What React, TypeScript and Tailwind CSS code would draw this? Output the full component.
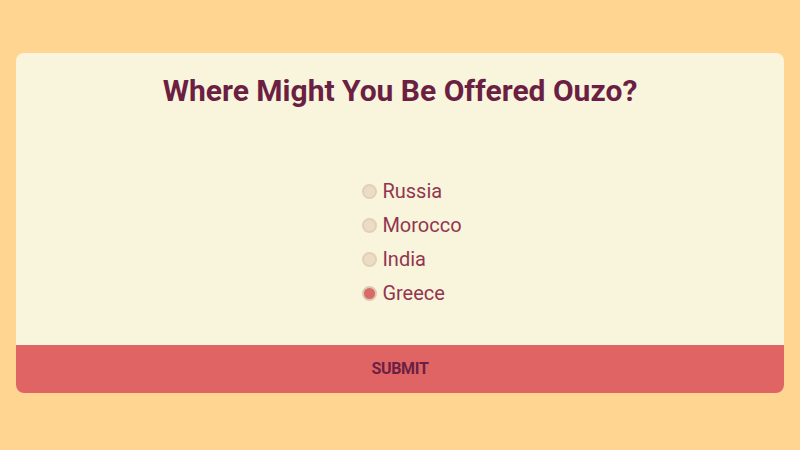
import { useState } from 'react';

const options = ['Russia', 'Morocco', 'India', 'Greece'];

export default function App() {
  const [selected, setSelected] = useState('Greece');

  return (
    <div className="flex h-[450px] w-[800px] justify-center bg-[#ffd591] pt-[53px] font-['Roboto',sans-serif]">
      <div className="flex h-[340px] w-[768px] flex-col overflow-hidden rounded-lg bg-[#f8f5dc]">
        <h1 className="mt-[18px] text-center text-[30px] font-bold leading-[40px] text-[#6b1f42]">
          Where Might You Be Offered Ouzo?
        </h1>
        <div className="flex flex-1 justify-center pt-[69px] pl-[24px]">
          <ul className="flex flex-col gap-[12px]">
            {options.map((option) => {
              const checked = option === selected;
              return (
                <li key={option}>
                  <label
                    className="flex h-[22px] cursor-pointer items-center gap-[5px] text-[20px] text-[#93354f]"
                    onClick={() => setSelected(option)}
                  >
                    <span
                      className={
                        checked
                          ? 'h-[15px] w-[15px] rounded-full border-2 border-[#dfc7ad] bg-[#d86a68]'
                          : 'h-[15px] w-[15px] rounded-full border-2 border-[#e2cfb7] bg-[#eddcc5]'
                      }
                    />
                    {option}
                  </label>
                </li>
              );
            })}
          </ul>
        </div>
        <button className="h-[48px] w-full bg-[#e06464] text-[16px] font-bold uppercase tracking-[-0.3px] text-[#6b1f42]">
          Submit
        </button>
      </div>
    </div>
  );
}
